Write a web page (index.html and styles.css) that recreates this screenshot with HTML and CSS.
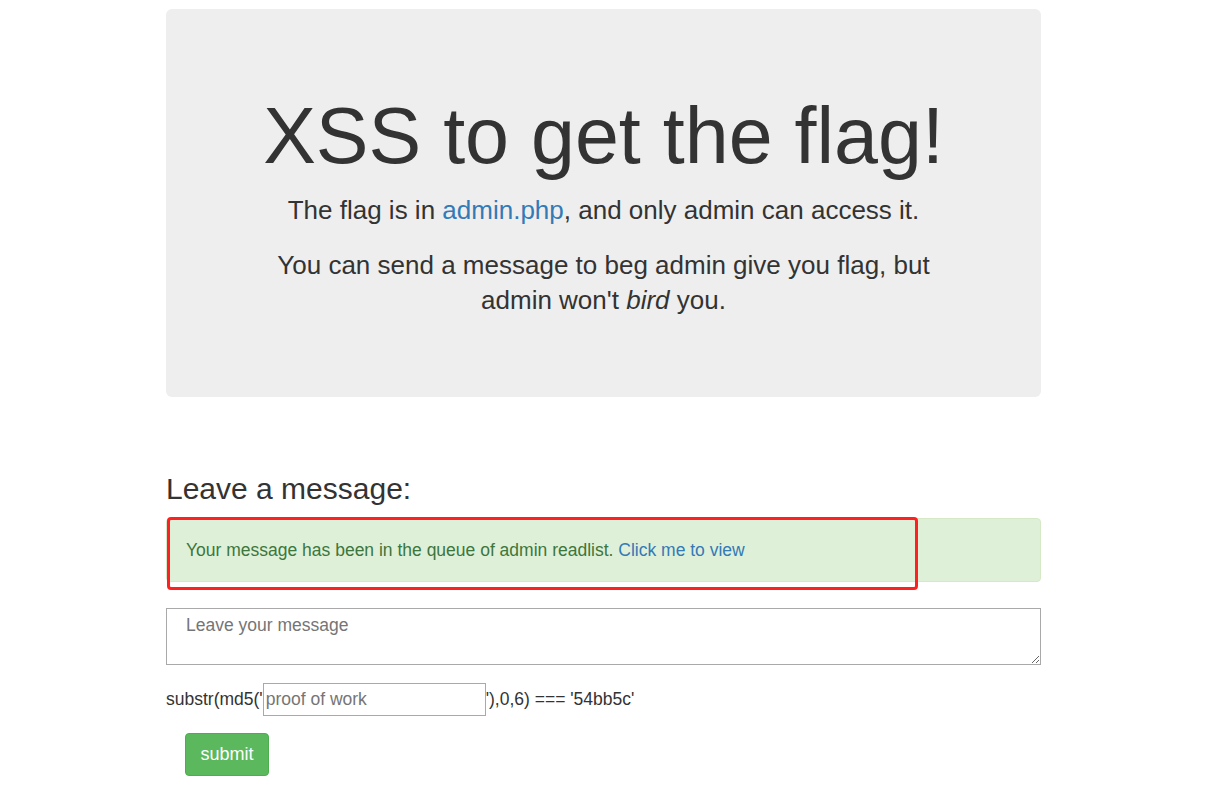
FILE: index.html
```html
<!DOCTYPE html>
<html>
<head>
<meta charset="utf-8">
<link rel="stylesheet" href="styles.css">
</head>
<body>
<div class="container">
  <div class="jumbotron">
    <h1 class="title">XSS to get the flag!</h1>
    <p class="lead">The flag is in <a href="#">admin.php</a>, and only admin can access it.</p>
    <p class="lead second">You can send a message to beg admin give you flag, but admin won't <i>bird</i>&nbsp;you.</p>
  </div>
  <h3 class="section-title">Leave a message:</h3>
  <div class="alert-wrap">
    <div class="alert">Your message has been in the queue of admin readlist. <a href="#">Click me to view</a></div>
    <div class="highlight"></div>
  </div>
  <form class="msg-form">
    <textarea class="message" placeholder="Leave your message"></textarea>
    <div class="pow">substr(md5('<input class="pow-input" type="text" placeholder="proof of work">'),0,6) === '54bb5c'</div>
    <button class="btn-submit" type="button">submit</button>
  </form>
</div>
</body>
</html>
```

FILE: styles.css
```css
html, body {
  margin: 0;
  padding: 0;
  background: #fff;
}
body {
  font-family: "Liberation Sans", Arial, sans-serif;
  color: #333;
}
a {
  color: #337ab7;
  text-decoration: none;
}
.container {
  width: 875px;
  margin-left: 166px;
  padding-top: 9px;
}
.jumbotron {
  background: #eeeeee;
  border-radius: 6px;
  padding: 83px 60px 79px;
  text-align: center;
}
.title {
  margin: 0 0 14px;
  font-size: 79px;
  line-height: 87px;
  font-weight: 400;
  color: #333;
}
.lead {
  margin: 0 auto;
  font-size: 26px;
  line-height: 35px;
  max-width: 700px;
}
.lead.second {
  margin-top: 20px;
}
.section-title {
  margin: 74px 0 0;
  font-size: 30px;
  line-height: 36px;
  font-weight: 400;
}
.alert-wrap {
  position: relative;
  margin-top: 11px;
}
.alert {
  background: #dff0d8;
  border: 1px solid #d6e9c6;
  border-radius: 4px;
  color: #3c763d;
  font-size: 17.5px;
  line-height: 24px;
  padding: 19px;
}
.highlight {
  position: absolute;
  left: 1px;
  top: -1px;
  width: 745px;
  height: 67px;
  border: 3px solid #ff2020;
  border-radius: 4px;
}
.msg-form {
  margin-top: 26px;
}
.message {
  display: block;
  box-sizing: border-box;
  width: 875px;
  height: 57px;
  margin: 0;
  border: 1px solid #a9a9a9;
  padding: 5px 19px;
  font-family: "Liberation Sans", Arial, sans-serif;
  font-size: 17.5px;
  line-height: 22px;
  color: #333;
  resize: vertical;
}
.message::placeholder,
.pow-input::placeholder {
  color: #757575;
}
.pow {
  margin-top: 18px;
  font-size: 17.5px;
  line-height: 33px;
  display: flex;
  align-items: center;
}
.pow-input {
  box-sizing: border-box;
  width: 223px;
  height: 33px;
  margin: 0;
  border: 1px solid #a9a9a9;
  padding: 1px 2px;
  font-family: "Liberation Sans", Arial, sans-serif;
  font-size: 17.5px;
  color: #333;
}
.btn-submit {
  display: block;
  margin: 17px 0 0 19px;
  width: 84px;
  height: 43px;
  background: #5cb85c;
  border: 1px solid #4cae4c;
  border-radius: 4px;
  color: #fff;
  font-family: "Liberation Sans", Arial, sans-serif;
  font-size: 18px;
  padding: 0;
}
```
